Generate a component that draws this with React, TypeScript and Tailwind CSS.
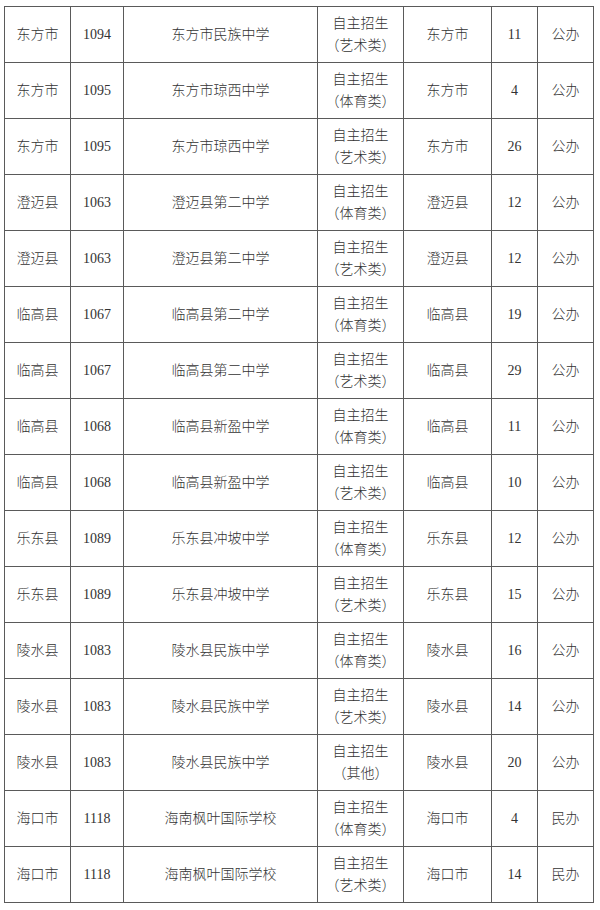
const rows: [string, string, string, string, string, string, string][] = [
  ["东方市", "1094", "东方市民族中学", "艺术类", "东方市", "11", "公办"],
  ["东方市", "1095", "东方市琼西中学", "体育类", "东方市", "4", "公办"],
  ["东方市", "1095", "东方市琼西中学", "艺术类", "东方市", "26", "公办"],
  ["澄迈县", "1063", "澄迈县第二中学", "体育类", "澄迈县", "12", "公办"],
  ["澄迈县", "1063", "澄迈县第二中学", "艺术类", "澄迈县", "12", "公办"],
  ["临高县", "1067", "临高县第二中学", "体育类", "临高县", "19", "公办"],
  ["临高县", "1067", "临高县第二中学", "艺术类", "临高县", "29", "公办"],
  ["临高县", "1068", "临高县新盈中学", "体育类", "临高县", "11", "公办"],
  ["临高县", "1068", "临高县新盈中学", "艺术类", "临高县", "10", "公办"],
  ["乐东县", "1089", "乐东县冲坡中学", "体育类", "乐东县", "12", "公办"],
  ["乐东县", "1089", "乐东县冲坡中学", "艺术类", "乐东县", "15", "公办"],
  ["陵水县", "1083", "陵水县民族中学", "体育类", "陵水县", "16", "公办"],
  ["陵水县", "1083", "陵水县民族中学", "艺术类", "陵水县", "14", "公办"],
  ["陵水县", "1083", "陵水县民族中学", "其他", "陵水县", "20", "公办"],
  ["海口市", "1118", "海南枫叶国际学校", "体育类", "海口市", "4", "民办"],
  ["海口市", "1118", "海南枫叶国际学校", "艺术类", "海口市", "14", "民办"],
]

const cell = "border border-[#5a5a5a] text-center align-middle p-0"

export default function App() {
  return (
    <div className="w-[600px] h-[910px] bg-white pt-[6px] pl-[4px] font-['Liberation_Serif','Noto_Sans_CJK_SC',serif] text-[14px] text-[#333] font-light">
      <table className="table-fixed border-collapse w-[589px]">
        <colgroup>
          <col className="w-[66px]" />
          <col className="w-[53px]" />
          <col className="w-[194px]" />
          <col className="w-[86px]" />
          <col className="w-[88px]" />
          <col className="w-[46px]" />
          <col className="w-[56px]" />
        </colgroup>
        <tbody>
          {rows.map((r, i) => (
            <tr key={i} className="h-[56px]">
              <td className={cell}>{r[0]}</td>
              <td className={cell}>{r[1]}</td>
              <td className={cell}>{r[2]}</td>
              <td className={cell}>
                <div className="leading-[22px]">自主招生</div>
                <div className="leading-[22px] [font-feature-settings:'halt']">（{r[3]}）</div>
              </td>
              <td className={cell}>{r[4]}</td>
              <td className={cell}>{r[5]}</td>
              <td className={cell}>{r[6]}</td>
            </tr>
          ))}
        </tbody>
      </table>
    </div>
  )
}
